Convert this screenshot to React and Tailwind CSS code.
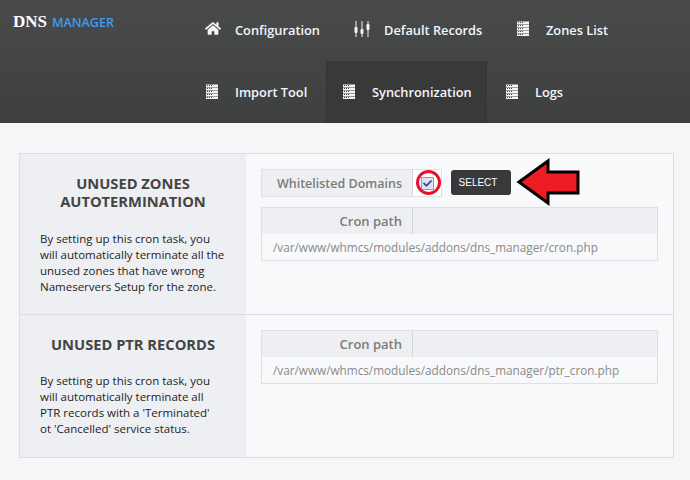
import React from "react";
import { FaHome, FaCheck } from "react-icons/fa";

const ListIcon = () => (
  <svg width="12" height="15" viewBox="0 0 12 15" className="shrink-0 -translate-x-[1px]">
    {[0, 3, 6, 9, 12].map((y) => (
      <g key={y}>
        <rect x="0" y={y + 0.5} width="12" height="2.5" fill="#f4f4f4" />
        <rect x="1" y={y + 1} width="1" height="1" fill="#444" />
        <rect x="3" y={y + 1} width="1" height="1" fill="#444" />
        <rect x="5" y={y + 1} width="1" height="1" fill="#444" />
      </g>
    ))}
  </svg>
);

const SlidersIcon = () => (
  <svg width="16" height="16" viewBox="0 0 16 16" className="shrink-0">
    <g fill="#f4f4f4">
      <rect x="1.5" y="0" width="1" height="16" />
      <rect x="0.5" y="6" width="3" height="6" rx="1" />
      <rect x="7.5" y="0" width="1" height="16" />
      <rect x="6.5" y="8" width="3" height="5" rx="1" />
      <rect x="13.5" y="0" width="1" height="16" />
      <rect x="12.5" y="3" width="3" height="6" rx="1" />
    </g>
  </svg>
);

const NavItem = ({ icon, label, active, className }) => (
  <div
    className={`flex h-full items-center gap-[14px] ${active ? "border-x border-[#343535] bg-[#383939] pl-[15px]" : "pl-4"} ${className || ""}`}
  >
    <span className="flex w-4 -translate-y-[2px] justify-center">{icon}</span>
    <span className="text-[12.8px] font-semibold text-[#f2f6fa]">{label}</span>
  </div>
);

const CronBox = ({ path }) => (
  <div className="border border-[#dfe0e3]">
    <div className="flex h-[26px] bg-[#eeeff2]">
      <div className="w-[151px] border-r border-[#d5d6d9] pr-[10px] text-right text-[13px] font-semibold leading-[26px] text-[#7b7b7b]">
        Cron path
      </div>
    </div>
    <div className="h-[26px] bg-[#f8f9fa] px-[11px] text-[11.75px] leading-[26px] text-[#8a8a8a]">{path}</div>
  </div>
);

const Section = ({ title, lines, className, descClass, children }) => (
  <div className={`flex ${className}`}>
    <div className="w-[226px] shrink-0 bg-[#eeeff2] px-[20px] pt-[20px]">
      <h3 className="text-center text-[14.7px] font-bold leading-[18px] text-[#444]">{title}</h3>
      <p className={`text-[11.5px] leading-4 text-[#1d1d1d] ${descClass}`}>
        {lines.map((line) => (
          <span key={line} className="block whitespace-nowrap">
            {line}
          </span>
        ))}
      </p>
    </div>
    <div className="flex-1 px-[15px] pt-[15px]">{children}</div>
  </div>
);

export default function App() {
  return (
    <div className="relative h-[480px] w-[690px] overflow-hidden bg-[#f5f6f8] font-['Open_Sans',sans-serif]">
      <header className="flex h-[123px] bg-gradient-to-b from-[#494b4b] to-[#3e3f3f]">
        <div className="w-[189px] shrink-0 pl-[13px] pt-[11px] leading-5">
          <span className="font-['Liberation_Serif',serif] text-[17px] font-bold text-white">DNS</span>
          <span className="ml-[5px] text-[12.5px] font-semibold text-[#3c9df0]">MANAGER</span>
        </div>
        <nav className="flex-1">
          <div className="flex h-[61px]">
            <NavItem icon={<FaHome className="text-[17px] text-[#f4f4f4]" />} label="Configuration" className="w-[149px]" />
            <NavItem icon={<SlidersIcon />} label="Default Records" className="w-[162px]" />
            <NavItem icon={<ListIcon />} label="Zones List" className="w-[120px]" />
          </div>
          <div className="flex h-[62px]">
            <NavItem icon={<ListIcon />} label="Import Tool" className="w-[137px] pt-[2px]" />
            <NavItem icon={<ListIcon />} label="Synchronization" active className="w-[161px] pt-[2px]" />
            <NavItem icon={<ListIcon />} label="Logs" className="ml-[2px] w-[90px] pt-[2px]" />
          </div>
        </nav>
      </header>

      <main className="ml-[19px] mt-[30px] w-[655px] border border-[#dcdde0] bg-[#f8f9fa]">
        <Section
          title={
            <>
              UNUSED ZONES
              <br />
              AUTOTERMINATION
            </>
          }
          lines={[
            "By setting up this cron task, you",
            "will automatically terminate all the",
            "unused zones that have wrong",
            "Nameservers Setup for the zone.",
          ]}
          className="h-[161px] border-b border-[#dcdde0]"
          descClass="mt-[21px]"
        >
          <div className="flex h-[28px] items-center">
            <div className="flex h-full border border-[#dfe0e3]">
              <div className="w-[151px] border-r border-[#d5d6d9] bg-[#eeeff2] pr-[10px] text-right text-[12.5px] font-semibold leading-[27px] text-[#7b7b7b]">
                Whitelisted Domains
              </div>
              <div className="flex w-[28px] items-center justify-center bg-white">
                <span className="flex h-[13px] w-[13px] items-center justify-center border border-[#9a9aa5] bg-[#dfe1ec]">
                  <FaCheck className="text-[9px] text-[#3a4a9e]" />
                </span>
              </div>
            </div>
            <button className="ml-[9px] h-[25px] w-[60px] -translate-y-[1px] rounded-[3px] bg-[#38393b] pr-[6px] pt-[1px] font-['Liberation_Sans',sans-serif] text-[10px] text-white">
              SELECT
            </button>
          </div>
          <div className="mt-[10px]">
            <CronBox path="/var/www/whmcs/modules/addons/dns_manager/cron.php" />
          </div>
        </Section>
        <Section
          title="UNUSED PTR RECORDS"
          lines={[
            "By setting up this cron task, you",
            "will automatically terminate all",
            "PTR records with a 'Terminated'",
            "ot 'Cancelled' service status.",
          ]}
          className="h-[142px]"
          descClass="mt-[20px]"
        >
          <CronBox path="/var/www/whmcs/modules/addons/dns_manager/ptr_cron.php" />
        </Section>
      </main>

      {/* hand drawn annotations on top of the screenshot */}
      <div className="absolute left-[416px] top-[170px] h-[25px] w-[25px] rounded-full border-[3px] border-[#e8112d]" />
      <svg className="absolute left-[516px] top-[158px]" width="65" height="48" viewBox="0 0 65 48">
        <path d="M3 24 L32 3 L32 14 L62 14 L62 35 L32 35 L32 45 Z" fill="#ed1c24" stroke="#000" strokeWidth="3" />
      </svg>
    </div>
  );
}
